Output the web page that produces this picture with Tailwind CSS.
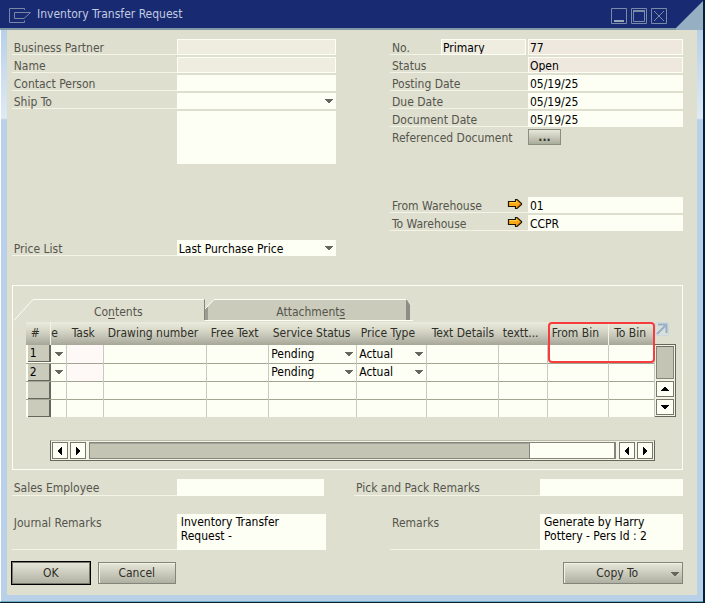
<!DOCTYPE html>
<html lang="en">
<head>
<meta charset="utf-8">
<title>Inventory Transfer Request</title>
<script src="https://cdn.jsdelivr.net/npm/@tailwindcss/browser@4"></script>
</head>
<body class="bg-[#dedfcf] font-['DejaVu_Sans_Condensed','DejaVu_Sans',sans-serif] text-[12px] leading-4 text-[#55554d]">
<svg class="hidden" aria-hidden="true">
  <symbol id="caret" viewBox="0 0 8 4"><path d="M0 0h8v1H7v1H6v1H5v1H3V3H2V2H1V1H0z" fill="#66665e"/></symbol>
  <symbol id="link" viewBox="0 0 16 12"><path d="M1.500 3.500H8.500V1.500H10L14.500 5.500V6.500L10 10.500H8.500V8.500H1.500z" fill="#fba819" stroke="#1d1505" stroke-width="1.200"/><path d="M2.500 4.500h7V3" stroke="#ffd23c" fill="none"/><path d="M10 9l3-3" stroke="#f07d05" fill="none"/></symbol>
  <symbol id="tri-left" viewBox="0 0 8 10"><path d="M6 1v8H5V8H4V7H3V6H2V4H3V3H4V2H5V1z" fill="#000"/></symbol>
</svg>
<main class="flex min-h-screen flex-col border-r-2 border-b border-r-[#06223a] border-b-[#0b2430]">
  <header class="relative flex h-[30px] items-start border-b-2 border-[#8299a8] bg-[#172a72] pr-9 pl-[9px]">
    <svg class="mt-2 h-4 w-[22px]" viewBox="0 0 22 16" fill="none" stroke="#7a86a4" aria-hidden="true"><path d="M15.500 2V.5H.5V14.500H15.500V12.500M15 4.500H5.500V10.500H15L21.500 4.500z"/></svg>
    <h1 class="mt-[6px] ml-[6px] flex-1 text-[#c3cbe0]">Inventory Transfer Request</h1>
    <div class="mt-2 flex gap-1">
      <button aria-label="Minimize" class="h-4 w-4"><svg class="h-4 w-4" viewBox="0 0 16 16" fill="none" stroke="#7a8ba8"><path d="M.5.5h15v15H.5z"/><path d="M3 13h10" stroke-width="2" stroke="#98a8b8"/></svg></button>
      <button aria-label="Maximize" class="h-4 w-4"><svg class="h-4 w-4" viewBox="0 0 16 16" fill="none" stroke="#7a8ba8"><path d="M.5.5h15v15H.5zM2.500 3.500h11v10h-11z"/><path d="M2 3h12" stroke-width="2"/></svg></button>
      <button aria-label="Close" class="h-4 w-4"><svg class="h-4 w-4" viewBox="0 0 16 16" fill="none" stroke="#7a8ba8"><path d="M.5.5h15v15H.5zM3 3l10 10M13 3L3 13"/></svg></button>
    </div>
    <svg class="absolute top-0 right-0 h-[30px] w-[27px]" viewBox="0 0 27 30" aria-hidden="true"><path d="M0 28L27 1V30H0z" fill="#97afc2"/></svg>
  </header>

  <div class="flex flex-1 border-b border-l border-b-[#6aaac4] border-l-white">
    <div class="w-[6px] bg-[linear-gradient(#b8d0e8_0px,#dfeaf4_88px,#b8d0e8_90px)]"></div>
    <div class="flex flex-1 flex-col border-b-[6px] border-[#b8d0e8] pt-[9px] pr-[14px] pb-[10px] pl-[5px]">

      <form class="grid grid-cols-[324fr_293fr] gap-x-[54px] [&_label]:pt-px">
        <div class="flex flex-col gap-[2px]">
          <div class="flex h-4"><label for="bp" class="w-[165px] border-b border-[#f4f4e6] pl-[2px]">Business Partner</label><input id="bp" class="min-w-0 flex-1 border border-[#fdfef4] bg-[#efece0]"></div>
          <div class="flex h-4"><label for="nm" class="w-[165px] border-b border-[#f4f4e6] pl-[2px]">Name</label><input id="nm" class="min-w-0 flex-1 border border-[#fdfef4] bg-[#efece0]"></div>
          <div class="flex h-4"><label for="cp" class="w-[165px] border-b border-[#f4f4e6] pl-[2px]">Contact Person</label><input id="cp" class="min-w-0 flex-1 bg-[#fdfef4]"></div>
          <div class="flex h-4"><label for="st" class="w-[165px] border-b border-[#f4f4e6] pl-[2px]">Ship To</label>
            <div class="relative flex-1"><select id="st" class="block h-4 w-full appearance-none bg-[#fdfef4]"><option></option></select><svg class="pointer-events-none absolute top-[6px] right-[3px] h-1 w-2"><use href="#caret"/></svg></div></div>
          <textarea aria-label="Ship To Address" class="ml-[165px] block h-[53px] resize-none bg-[#fdfef4]"></textarea>
          <div class="mt-[74px] flex h-4"><label for="pl" class="w-[165px] border-b border-[#f4f4e6] pl-[2px]">Price List</label>
            <div class="relative flex-1"><select id="pl" class="block h-4 w-full appearance-none bg-[#fdfef4] pt-px pl-[2px] text-black"><option>Last Purchase Price</option></select><svg class="pointer-events-none absolute top-[6px] right-[3px] h-1 w-2"><use href="#caret"/></svg></div></div>
        </div>
        <div class="flex flex-col gap-[2px] [&_input]:pt-px">
          <div class="flex h-4"><label for="no" class="w-[51px] border-b border-[#f4f4e6] pl-[2px]">No.</label><input aria-label="Series" value="Primary" class="mr-[2px] w-[85px] border border-[#fdfef4] bg-[#efece0] pl-px text-black"><input id="no" value="77" class="min-w-0 flex-1 border border-[#fdfef4] bg-[#efe8df] pl-px text-black"></div>
          <div class="flex h-4"><label for="ss" class="w-[138px] border-b border-[#f4f4e6] pl-[2px]">Status</label><input id="ss" value="Open" class="min-w-0 flex-1 border border-[#fdfef4] bg-[#efe8df] pl-px text-black"></div>
          <div class="flex h-4"><label for="pd" class="w-[138px] border-b border-[#f4f4e6] pl-[2px]">Posting Date</label><input id="pd" value="05/19/25" class="min-w-0 flex-1 bg-[#fdfef4] pl-[2px] text-black"></div>
          <div class="flex h-4"><label for="dd" class="w-[138px] border-b border-[#f4f4e6] pl-[2px]">Due Date</label><input id="dd" value="05/19/25" class="min-w-0 flex-1 bg-[#fdfef4] pl-[2px] text-black"></div>
          <div class="flex h-4"><label for="dc" class="w-[138px] border-b border-[#f4f4e6] pl-[2px]">Document Date</label><input id="dc" value="05/19/25" class="min-w-0 flex-1 bg-[#fdfef4] pl-[2px] text-black"></div>
          <div class="flex h-4"><label for="rd" class="w-[138px] pl-[2px]">Referenced Document</label><button id="rd" type="button" class="h-4 w-[33px] border border-[#8d8d7e] bg-linear-to-b from-[#e8e8da] to-[#a9ab9b] leading-[12px] font-bold text-[#33332b]">...</button></div>
          <div class="mt-[50px] flex h-4"><label for="fw" class="flex w-[138px] items-start justify-between border-b border-[#f4f4e6] pr-[5px] pl-[2px]">From Warehouse<svg class="h-3 w-4"><use href="#link"/></svg></label><input id="fw" value="01" class="min-w-0 flex-1 bg-[#fdfef4] pl-[2px] text-black"></div>
          <div class="flex h-4"><label for="tw" class="flex w-[138px] items-start justify-between border-b border-[#f4f4e6] pr-[5px] pl-[2px]">To Warehouse<svg class="h-3 w-4"><use href="#link"/></svg></label><input id="tw" value="CCPR" class="min-w-0 flex-1 bg-[#fdfef4] pl-[2px] text-black"></div>
        </div>
      </form>

      <section class="mt-[29px] border border-[#fdfef4] pt-[13px] pr-[6px] pb-2 pl-px">
        <div class="flex h-[23px]" role="tablist">
          <button role="tab" aria-selected="true" class="relative h-[22px] w-[191px] pt-[3px] pl-[18px]">
            <svg class="absolute inset-0 h-[22px] w-[191px]" viewBox="0 0 191 22" aria-hidden="true"><path d="M0 21.500L19 .5H190" fill="none" stroke="#fdfef4"/><path d="M190.500 .5V21" stroke="#84847a"/></svg>
            <span class="relative">Co<u class="underline-offset-2">n</u>tents</span></button>
          <button role="tab" class="relative h-[22px] w-[208px] pt-[3px] pl-1">
            <svg class="absolute inset-0 h-[22px] w-[208px]" viewBox="0 0 208 22" aria-hidden="true"><path d="M0 21V11L9 .5H201V21z" fill="#cbcbbb"/><path d="M0 21V9L3 8V21z" fill="#9b9b92"/><path d="M0 10L9 .5H201M0 21.500H208" fill="none" stroke="#fdfef4"/><path d="M201 1H202L205 6V21H201z" fill="#8d8d86"/></svg>
            <span class="relative">Attachment<u class="underline-offset-2">s</u></span></button>
        </div>
        <div class="flex pl-3">
          <div class="relative flex-1">
            <table class="w-full table-fixed border-collapse text-black">
              <colgroup><col class="w-[25px]"><col class="w-[16px]"><col class="w-[37px]"><col class="w-[103px]"><col class="w-[62px]"><col class="w-[88px]"><col class="w-[70px]"><col class="w-[72px]"><col class="w-[49px]"><col class="w-[61px]"><col class="w-[46px]"></colgroup>
              <thead><tr class="h-[23px] bg-[linear-gradient(#ebebdd,#dcdccd_30%,#c6c7b8_60%,#a6a797)] text-left whitespace-nowrap text-[#2f2f28] *:p-0 *:pb-px *:font-normal">
                <th class="border-r border-[#f4f4e6]"><span class="pl-[5px]">#</span></th><th>e</th><th><span class="pl-[5px]">Task</span></th><th><span class="pl-1">Drawing number</span></th><th><span class="pl-1">Free Text</span></th><th><span class="pl-1">Service Status</span></th><th><span class="pl-1">Price Type</span></th><th class="overflow-hidden"><span class="pl-[5px]">Text Details</span></th><th><span class="pl-1">textt...</span></th><th class="border-r border-[#f4f4e6]"><span class="pl-1">From Bin</span></th><th><span class="pl-[5px]">To Bin</span></th></tr></thead>
              <tbody class="bg-[#fdfef4] *:h-[18px] *:border-b *:border-[#a3a492] *:last:border-b-0 [&_td]:border-r [&_td]:border-r-[#c9c9c4] [&_td]:p-0 [&_th]:p-0">
                <tr><th class="font-normal"><div class="ml-[2px] h-[17px] border-r-2 border-b border-[#66665c] bg-[#cbcbbb] pl-[2px] text-left">1</div></th><td><svg class="ml-1 h-1 w-2"><use href="#caret"/></svg></td><td class="bg-[#fef9f7]"></td><td></td><td></td>
                  <td><div class="relative"><select aria-label="Service Status 1" class="block h-4 w-full appearance-none pl-[2px]"><option>Pending</option></select><svg class="pointer-events-none absolute top-[6px] right-[3px] h-1 w-2"><use href="#caret"/></svg></div></td>
                  <td><div class="relative"><select aria-label="Price Type 1" class="block h-4 w-full appearance-none pl-[2px]"><option>Actual</option></select><svg class="pointer-events-none absolute top-[6px] right-[3px] h-1 w-2"><use href="#caret"/></svg></div></td><td></td><td></td><td></td><td></td></tr>
                <tr><th class="font-normal"><div class="ml-[2px] h-[17px] border-r-2 border-b border-[#66665c] bg-[#cbcbbb] pl-[2px] text-left">2</div></th><td><svg class="ml-1 h-1 w-2"><use href="#caret"/></svg></td><td class="bg-[#fef9f7]"></td><td></td><td></td>
                  <td><div class="relative"><select aria-label="Service Status 2" class="block h-4 w-full appearance-none pl-[2px]"><option>Pending</option></select><svg class="pointer-events-none absolute top-[6px] right-[3px] h-1 w-2"><use href="#caret"/></svg></div></td>
                  <td><div class="relative"><select aria-label="Price Type 2" class="block h-4 w-full appearance-none pl-[2px]"><option>Actual</option></select><svg class="pointer-events-none absolute top-[6px] right-[3px] h-1 w-2"><use href="#caret"/></svg></div></td><td></td><td></td><td></td><td></td></tr>
                <tr><th><div class="ml-[2px] h-[17px] border-r-2 border-b border-[#66665c] bg-[#cbcbbb]"></div></th><td></td><td></td><td></td><td></td><td></td><td></td><td></td><td></td><td></td><td></td></tr>
                <tr><th><div class="ml-[2px] h-[17px] border-r-2 border-b border-[#66665c] bg-[#cbcbbb]"></div></th><td></td><td></td><td></td><td></td><td></td><td></td><td></td><td></td><td></td><td></td></tr>
              </tbody>
            </table>
            <div class="pointer-events-none absolute top-0 right-0 h-[41px] w-[107px] rounded-[4px] border-2 border-[#f63c3c]"></div>
          </div>
          <div class="flex w-[21px] flex-col">
            <button aria-label="Expand table" class="h-[22px]"><svg class="-mt-[8px] h-[14px] w-[14px]" viewBox="0 0 14 14" fill="none"><path d="M.5.5h13v13H.5z" fill="#d9e0dc" stroke="#cbd8dd"/><path d="M2 12L10 4M3 2.500H11.500V11" stroke="#98aec6" stroke-width="2"/></svg></button>
            <div class="flex flex-1 flex-col gap-[2px] border-t border-r border-b border-[#66665c] bg-[#f4f4e6] p-px">
              <div class="flex-1 border border-[#84847a] border-t-[#6d6d64] bg-[#c4c4b4]"></div>
              <button aria-label="Scroll up" class="grid h-4 place-items-center border border-[#77776c] bg-[#fdfef4]"><svg class="h-[8px] w-[10px]" viewBox="0 0 10 8"><path d="M4 2h2v1h1v1h1v1h1v1H1V5h1V4h1V3h1z"/></svg></button>
              <button aria-label="Scroll down" class="grid h-4 place-items-center border border-[#77776c] bg-[#fdfef4]"><svg class="h-[8px] w-[10px]" viewBox="0 0 10 8"><path d="M1 2h8v1H8v1H7v1H6v1H4V5H3V4H2V3H1z"/></svg></button>
            </div>
          </div>
        </div>
        <div class="mt-[23px] mr-[21px] ml-9 flex h-[21px] gap-[2px] border border-[#66665c] border-t-[#b9baa9] bg-[#f4f4e6] p-px">
          <button aria-label="Scroll left" class="grid w-4 place-items-center border border-[#77776c] bg-[#fdfef4]"><svg class="h-[10px] w-2"><use href="#tri-left"/></svg></button>
          <button aria-label="Scroll right" class="grid w-4 place-items-center border border-[#77776c] bg-[#fdfef4]"><svg class="h-[10px] w-2 -scale-x-100"><use href="#tri-left"/></svg></button>
          <div class="mx-px flex flex-1 border border-r-2 border-[#84847a]"><div class="w-[84%] border-t border-r border-[#84847a] border-t-[#a3a499] bg-[#c4c4b4]"></div><div class="flex-1 bg-[#fdfef4]"></div></div>
          <button aria-label="Page left" class="grid w-4 place-items-center border border-[#77776c] bg-[#fdfef4]"><svg class="h-[10px] w-2"><use href="#tri-left"/></svg></button>
          <button aria-label="Page right" class="grid w-4 place-items-center border border-[#77776c] bg-[#fdfef4]"><svg class="h-[10px] w-2 -scale-x-100"><use href="#tri-left"/></svg></button>
        </div>
      </section>

      <form class="mt-[9px] grid grid-cols-[314fr_327fr] gap-x-[30px] gap-y-[18px] [&_label]:pt-px">
        <div class="flex h-[17px] pr-[2px]"><label for="se" class="w-[165px] border-b border-[#f4f4e6] pl-[2px]">Sales Employee</label><input id="se" class="min-w-0 flex-1 bg-[#fdfef4]"></div>
        <div class="flex h-[17px]"><label for="pp" class="-ml-[2px] w-[186px] border-b border-[#f4f4e6] pl-[2px]">Pick and Pack Remarks</label><input id="pp" class="min-w-0 flex-1 bg-[#fdfef4]"></div>
        <div class="flex h-9"><label for="jr" class="w-[165px] border-b border-[#f4f4e6] pl-[2px]">Journal Remarks</label><textarea id="jr" class="min-w-0 flex-1 resize-none overflow-hidden bg-[#fdfef4] pt-px pl-1 leading-[14px] text-black">Inventory Transfer Request -</textarea></div>
        <div class="flex h-9"><label for="rm" class="ml-[34px] w-[150px] border-b border-[#f4f4e6] pl-[2px]">Remarks</label><textarea id="rm" class="min-w-0 flex-1 resize-none overflow-hidden bg-[#fdfef4] pt-px pl-1 leading-[14px] text-black">Generate by Harry
Pottery - Pers Id : 2</textarea></div>
      </form>

      <footer class="mt-[11px] -ml-px flex h-6 items-center text-[#2f2f28]">
        <button class="h-6 w-20 border border-black bg-linear-to-b from-[#e8e8da] to-[#aeb0a2] shadow-[inset_0_0_0_1px_#77776c]">OK</button>
        <button class="ml-[7px] h-[22px] w-[78px] border border-[#84847a] bg-linear-to-b from-[#e8e8da] to-[#aeb0a2] shadow-[inset_1px_1px_0_#f1f1e5]">Cancel</button>
        <button class="relative ml-auto h-[22px] w-[120px] border border-[#84847a] bg-linear-to-b from-[#e8e8da] to-[#aeb0a2] pr-3 shadow-[inset_1px_1px_0_#f1f1e5]">Copy To<svg class="absolute top-[9px] right-[3px] h-1 w-2"><use href="#caret"/></svg></button>
      </footer>
    </div>
    <div class="w-[6px] bg-[linear-gradient(#b8d0e8_0px,#dfeaf4_88px,#b8d0e8_90px)]"></div>
  </div>
</main>
</body>
</html>
